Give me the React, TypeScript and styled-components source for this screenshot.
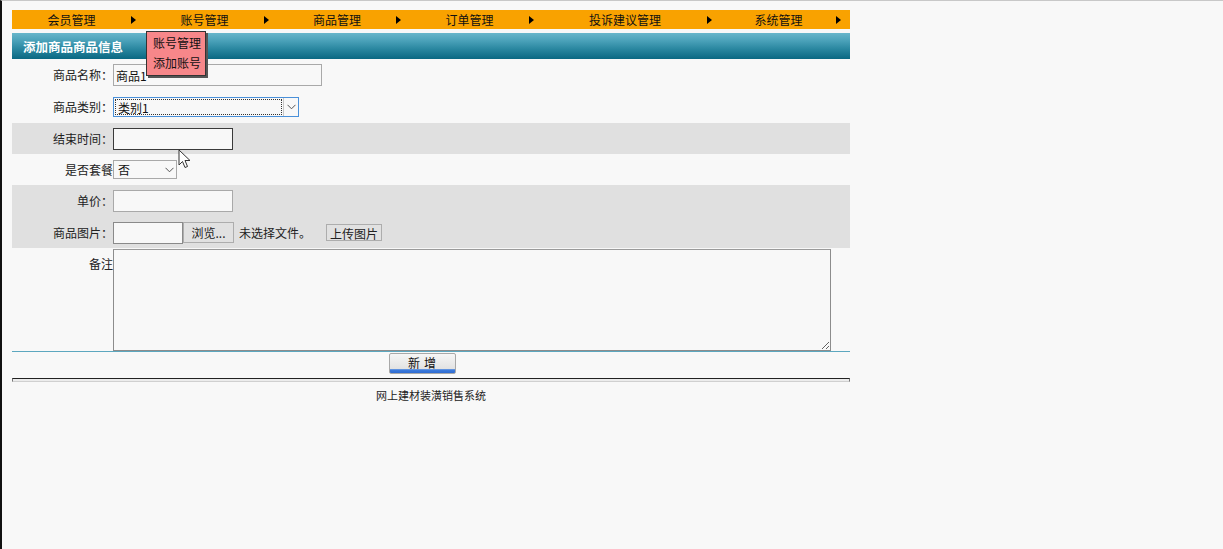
import React from "react";
import styled, { createGlobalStyle } from "styled-components";

const Global = createGlobalStyle`
  html, body { margin: 0; padding: 0; background: #f8f8f8; }
  body { font-family: "Noto Sans CJK SC", "Noto Sans", sans-serif; font-size: 12px; color: #222; }
  * { box-sizing: border-box; }
`;

const Frame = styled.div`
  min-height: 549px;
  border-left: 2px solid #111;
  border-top: 1px solid #c8c8c8;
  padding: 9px 10px;
  position: relative;
`;

const Main = styled.div`
  width: 838px;
`;

const Nav = styled.div`
  display: grid;
  grid-template-columns: 133px 133px 132px 133px 178px 129px;
  height: 19px;
  background: #f9a200;
`;

const NavItem = styled.div`
  position: relative;
  display: flex;
  align-items: center;
  padding-right: 9px;
`;

const NavText = styled.span`
  flex: 1;
  text-align: center;
  line-height: 19px;
  color: #111;
`;

const Arrow = styled.span`
  width: 0;
  height: 0;
  border-top: 4px solid transparent;
  border-bottom: 4px solid transparent;
  border-left: 5px solid #000;
`;

const Dropdown = styled.div`
  position: absolute;
  left: 1px;
  top: 21px;
  width: 60px;
  padding: 1px 0 2px 6px;
  background: #f7878a;
  border: 1px solid #333;
  box-shadow: 2px 2px 0 #555;
  z-index: 5;
`;

const DropItem = styled.div`
  line-height: 20px;
  color: #111;
  white-space: nowrap;
`;

const Header = styled.div`
  margin-top: 4px;
  height: 26px;
  background: linear-gradient(#68b6cb 0%, #4aa1b9 30%, #2b88a1 60%, #0a6882 100%);
  display: flex;
  align-items: center;
  padding-left: 11px;
  color: #fff;
  font-weight: bold;
  font-size: 12.5px;
`;

const Row = styled.div<{ $h: number; $gray?: boolean; $top?: boolean }>`
  display: flex;
  align-items: ${(p) => (p.$top ? "flex-start" : "center")};
  height: ${(p) => p.$h}px;
  background: ${(p) => (p.$gray ? "#e0e0e0" : "transparent")};
`;

const Label = styled.div<{ $pt?: number }>`
  width: 101px;
  flex: none;
  text-align: right;
  line-height: 16px;
  padding-top: ${(p) => p.$pt ?? 0}px;
  white-space: nowrap;
`;

const TextInput = styled.input<{ $w: number; $dark?: boolean }>`
  width: ${(p) => p.$w}px;
  height: 22px;
  margin: 0;
  padding: 0 2px;
  border: 1px solid ${(p) => (p.$dark ? "#3a3a3a" : "#a9a9a9")};
  background: #f8f8f8;
  font-family: inherit;
  font-size: 12px;
  color: #111;
  outline: none;
`;

const SelectBox = styled.div<{ $w: number; $h: number; $focus?: boolean }>`
  position: relative;
  width: ${(p) => p.$w}px;
  height: ${(p) => p.$h}px;
  border: 1px solid ${(p) => (p.$focus ? "#4a90d9" : "#a9a9a9")};
  background: #f8f8f8;
  display: flex;
  align-items: stretch;
`;

const SelectText = styled.div<{ $focus?: boolean }>`
  flex: 1;
  margin: 1px;
  padding-left: 2px;
  display: flex;
  align-items: center;
  border: 1px dotted ${(p) => (p.$focus ? "#333" : "transparent")};
  color: #111;
`;

const Chevron = styled.div<{ $sep?: boolean }>`
  width: 15px;
  display: flex;
  align-items: center;
  justify-content: center;
  border-left: 1px solid ${(p) => (p.$sep ? "#c8c8c8" : "transparent")};
`;

const FileBox = styled.div`
  width: 70px;
  height: 22px;
  border: 1px solid #8a8a8a;
  background: #f8f8f8;
`;

const GrayButton = styled.button<{ $w: number; $h: number; $ml: number }>`
  width: ${(p) => p.$w}px;
  height: ${(p) => p.$h}px;
  margin: 0 0 0 ${(p) => p.$ml}px;
  padding: 0;
  border: 1px solid #adadad;
  background: #e1e1e1;
  font-family: inherit;
  font-size: 12px;
  color: #222;
`;

const Hint = styled.span`
  margin-left: 5px;
  color: #222;
`;

const Remark = styled.textarea`
  width: 718px;
  height: 102px;
  margin: 1px 0 0 0;
  border: 1px solid #8c8c8c;
  border-top-color: #9a9a9a;
  background: #f8f8f8;
  font-family: inherit;
  outline: none;
`;

const ActionBar = styled.div`
  border-top: 1px solid #5ca7bf;
  display: flex;
  justify-content: center;
  padding: 1px 18px 0 0;
`;

const SubmitButton = styled.button`
  width: 67px;
  height: 21px;
  margin: 0;
  padding: 0 0 2px 0;
  border: 1px solid #a8a8a8;
  border-radius: 2px;
  background: linear-gradient(#f6f6f6, #e2e2e2 80%, #3f7ede 82%, #2f6bd0 100%);
  font-family: inherit;
  font-size: 12px;
  letter-spacing: 4px;
  text-indent: 4px;
  color: #111;
`;

const Rule = styled.div`
  margin-top: 4px;
  height: 4px;
  border-top: 1px solid #222;
  border-left: 1px solid #777;
  border-right: 1px solid #777;
  border-bottom: 1px solid #d0d0d0;
  background: #ececec;
`;

const Footer = styled.div`
  text-align: center;
  font-size: 11px;
  line-height: 16px;
  margin-top: 5px;
  color: #222;
`;

const Cursor = styled.svg`
  position: absolute;
  left: 176px;
  top: 148px;
`;

const ChevronIcon = () => (
  <svg width="9" height="6" viewBox="0 0 9 6">
    <path d="M0.5 0.8 L4.5 4.8 L8.5 0.8" fill="none" stroke="#555" strokeWidth="1" />
  </svg>
);

const navItems = ["会员管理", "账号管理", "商品管理", "订单管理", "投诉建议管理", "系统管理"];

export default function App() {
  return (
    <>
      <Global />
      <Frame>
        <Main>
          <Nav>
            {navItems.map((t, i) => (
              <NavItem key={t}>
                <NavText>{t}</NavText>
                <Arrow />
                {i === 1 && (
                  <Dropdown>
                    <DropItem>账号管理</DropItem>
                    <DropItem>添加账号</DropItem>
                  </Dropdown>
                )}
              </NavItem>
            ))}
          </Nav>
          <Header>添加商品商品信息</Header>

          <Row $h={32}>
            <Label>商品名称：</Label>
            <TextInput $w={209} defaultValue="商品1" />
          </Row>
          <Row $h={32}>
            <Label>商品类别：</Label>
            <SelectBox $w={186} $h={20} $focus>
              <SelectText $focus>类别1</SelectText>
              <Chevron $sep>
                <ChevronIcon />
              </Chevron>
            </SelectBox>
          </Row>
          <Row $h={31} $gray>
            <Label>结束时间：</Label>
            <TextInput $w={120} $dark />
          </Row>
          <Row $h={31}>
            <Label>是否套餐</Label>
            <SelectBox $w={64} $h={19}>
              <SelectText>否</SelectText>
              <Chevron>
                <ChevronIcon />
              </Chevron>
            </SelectBox>
          </Row>
          <Row $h={32} $gray>
            <Label>单价：</Label>
            <TextInput $w={120} />
          </Row>
          <Row $h={31} $gray>
            <Label>商品图片：</Label>
            <FileBox />
            <GrayButton $w={51} $h={21} $ml={0}>浏览...</GrayButton>
            <Hint>未选择文件。</Hint>
            <GrayButton $w={56} $h={17} $ml={15}>上传图片</GrayButton>
          </Row>
          <Row $h={103} $top>
            <Label $pt={8}>备注</Label>
            <Remark />
          </Row>
          <ActionBar>
            <SubmitButton>新增</SubmitButton>
          </ActionBar>
          <Rule />
          <Footer>网上建材装潢销售系统</Footer>
        </Main>
        <Cursor width="14" height="20" viewBox="0 0 14 20">
          <path d="M1 1 L1 16 L4.5 12.5 L7 18.5 L9.5 17.5 L7 11.5 L12 11.5 Z" fill="#fff" stroke="#333" strokeWidth="1" />
        </Cursor>
      </Frame>
    </>
  );
}
